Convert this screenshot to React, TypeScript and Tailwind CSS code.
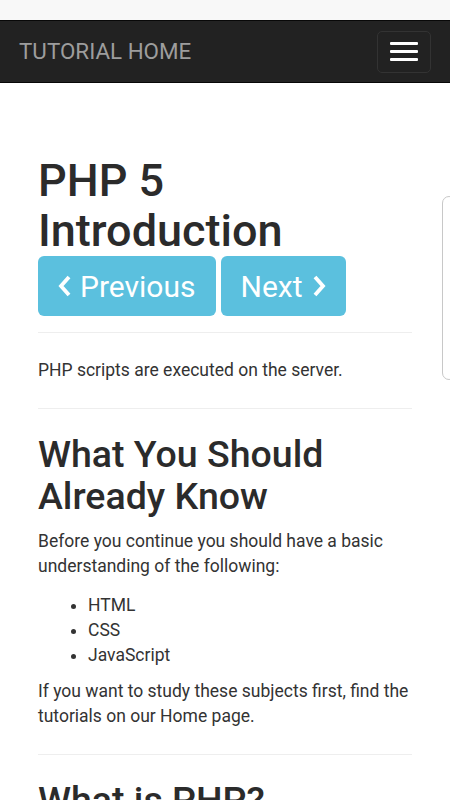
import React from 'react'

const ChevronLeft = () => (
  <svg width="16" height="24" viewBox="0 0 16 24" className="mr-[7px]">
    <path d="M12 3 L4 12 L12 21" fill="none" stroke="white" strokeWidth="3.8" />
  </svg>
)

const ChevronRight = () => (
  <svg width="16" height="24" viewBox="0 0 16 24" className="ml-[8px]">
    <path d="M4 3 L12 12 L4 21" fill="none" stroke="white" strokeWidth="3.8" />
  </svg>
)

const Navbar: React.FC = () => (
  <div className="h-[63px] bg-[#222] border-y border-[#080808] flex items-center justify-between pl-[19px] pr-[19px]">
    <span className="text-[22.4px] text-[#9d9d9d] leading-none">TUTORIAL HOME</span>
    <div className="w-[54px] h-[42px] border border-[#333] rounded-[5px] flex flex-col items-center justify-center gap-[5px]">
      <span className="block w-[28px] h-[3px] bg-white rounded-[1px]" />
      <span className="block w-[28px] h-[3px] bg-white rounded-[1px]" />
      <span className="block w-[28px] h-[3px] bg-white rounded-[1px]" />
    </div>
  </div>
)

export default function App() {
  return (
    <div className="relative w-[450px] h-[800px] overflow-hidden bg-white text-[#333]" style={{ fontFamily: 'Roboto, "Noto Sans", sans-serif' }}>
      <div className="h-[20px] bg-[#f8f8f8]" />
      <Navbar />

      <div className="px-[38px]">
        <h1 className="mt-[73px] text-[45px] leading-[50px] font-medium text-[#2b2b2b]">
          PHP 5
          <br />
          Introduction
        </h1>
        <div className="flex gap-[5px]">
          <button className="h-[60px] pl-[19px] pr-[20px] bg-[#5bc0de] rounded-[6px] text-white text-[30px] flex items-center">
            <ChevronLeft />
            Previous
          </button>
          <button className="h-[60px] pl-[20px] pr-[19px] bg-[#5bc0de] rounded-[6px] text-white text-[30px] flex items-center">
            Next
            <ChevronRight />
          </button>
        </div>

        <hr className="mt-[16px] border-t border-[#eee]" />
        <p className="mt-[25px] text-[17.5px] leading-[25px]">PHP scripts are executed on the server.</p>
        <hr className="mt-[25px] border-t border-[#eee]" />

        <h2 className="mt-[24px] text-[37.5px] leading-[42px] font-medium text-[#2b2b2b]">
          What You Should Already Know
        </h2>
        <p className="mt-[12px] text-[17.5px] leading-[25px]">
          Before you continue you should have a basic understanding of the following:
        </p>
        <ul className="mt-[14px] pl-[50px] list-disc text-[17.5px] leading-[25px]">
          <li>HTML</li>
          <li>CSS</li>
          <li>JavaScript</li>
        </ul>
        <p className="mt-[11px] text-[17.5px] leading-[25px]">
          If you want to study these subjects first, find the tutorials on our Home page.
        </p>
        <hr className="mt-[25px] border-t border-[#eee]" />
        <h2 className="mt-[24px] text-[37.5px] leading-[42px] font-medium text-[#2b2b2b]">What is PHP?</h2>
      </div>

      <div className="absolute right-[-6px] top-[196px] w-[14px] h-[184px] border border-[#c8c8c8] rounded-[7px] bg-white" />
    </div>
  )
}
